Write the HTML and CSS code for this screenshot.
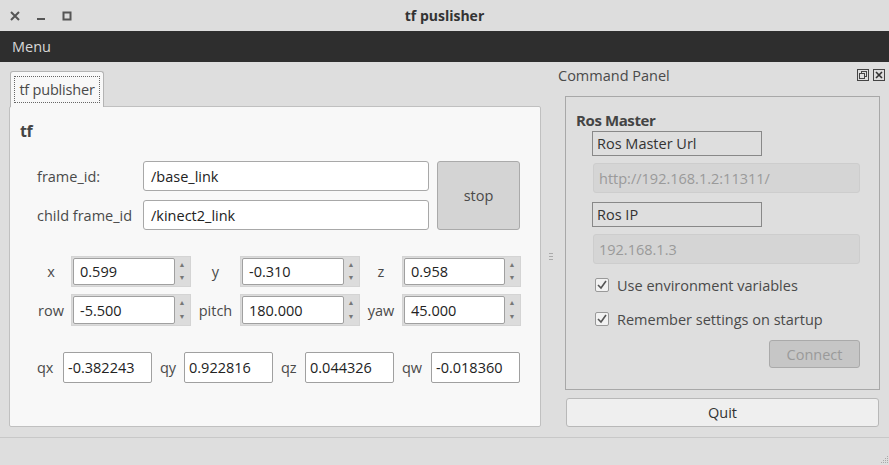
FILE: index.html
```html
<!DOCTYPE html>
<html>
<head>
<meta charset="utf-8">
<link rel="stylesheet" href="styles.css">
</head>
<body>
<div class="window">
  <div class="titlebar">
    <div class="wm-buttons">
      <svg class="wm-icon" width="10" height="10" viewBox="0 0 10 10"><path d="M1 1L9 9M9 1L1 9" stroke="#555" stroke-width="2"/></svg>
      <svg class="wm-icon" width="10" height="10" viewBox="0 0 10 10"><path d="M1 8H9" stroke="#555" stroke-width="2"/></svg>
      <svg class="wm-icon" width="10" height="10" viewBox="0 0 10 10"><rect x="1.5" y="1.5" width="7" height="7" fill="none" stroke="#555" stroke-width="2"/></svg>
    </div>
    <div class="title">tf puslisher</div>
  </div>
  <div class="menubar"><span class="menu-item">Menu</span></div>
  <div class="main">
    <div class="left">
      <div class="tabbar">
        <div class="tab"><span class="tab-focus">tf publisher</span></div>
      </div>
      <div class="tabpanel">
        <div class="heading">tf</div>
        <div class="frame-grid">
          <label class="lbl">frame_id:</label>
          <div class="field">/base_link</div>
          <div class="stop-btn">stop</div>
          <label class="lbl">child frame_id</label>
          <div class="field">/kinect2_link</div>
        </div>
        <div class="spin-grid">
          <span class="clbl">x</span>
          <div class="spin"><div class="spin-val">0.599</div><div class="spin-arrows"><span>▲</span><span>▼</span></div></div>
          <span class="clbl">y</span>
          <div class="spin"><div class="spin-val">-0.310</div><div class="spin-arrows"><span>▲</span><span>▼</span></div></div>
          <span class="clbl">z</span>
          <div class="spin"><div class="spin-val">0.958</div><div class="spin-arrows"><span>▲</span><span>▼</span></div></div>
          <span class="clbl">row</span>
          <div class="spin"><div class="spin-val">-5.500</div><div class="spin-arrows"><span>▲</span><span>▼</span></div></div>
          <span class="clbl">pitch</span>
          <div class="spin"><div class="spin-val">180.000</div><div class="spin-arrows"><span>▲</span><span>▼</span></div></div>
          <span class="clbl">yaw</span>
          <div class="spin"><div class="spin-val">45.000</div><div class="spin-arrows"><span>▲</span><span>▼</span></div></div>
        </div>
        <div class="quat-grid">
          <span class="qlbl first">qx</span>
          <div class="qfield">-0.382243</div>
          <span class="qlbl">qy</span>
          <div class="qfield">0.922816</div>
          <span class="qlbl">qz</span>
          <div class="qfield">0.044326</div>
          <span class="qlbl">qw</span>
          <div class="qfield">-0.018360</div>
        </div>
      </div>
    </div>
    <div class="splitter">
      <svg width="5" height="8" viewBox="0 0 5 8"><path d="M0 1.5H4M0 4.5H4M0 7.5H4" stroke="#aaa" stroke-width="1"/></svg>
    </div>
    <div class="dock">
      <div class="dock-title">
        <span>Command Panel</span>
        <div class="dock-btns">
          <svg width="12" height="12" viewBox="0 0 12 12"><rect x="0.5" y="0.5" width="11" height="11" fill="#ddd" stroke="#444"/><rect x="4.5" y="2.5" width="5" height="5" fill="none" stroke="#444"/><rect x="2.5" y="4.5" width="5" height="5" fill="#ddd" stroke="#444"/></svg>
          <svg width="12" height="12" viewBox="0 0 12 12"><rect x="0.5" y="0.5" width="11" height="11" fill="#ddd" stroke="#444"/><path d="M3 3L9 9M9 3L3 9" stroke="#333" stroke-width="1.6"/></svg>
        </div>
      </div>
      <div class="groupbox">
        <div class="group-title">Ros Master</div>
        <div class="gb-body">
          <div class="boxlabel">Ros Master Url</div>
          <div class="dis-field">http://192.168.1.2:11311/</div>
          <div class="boxlabel">Ros IP</div>
          <div class="dis-field">192.168.1.3</div>
          <div class="check-row">
            <span class="checkbox"><svg width="14" height="14" viewBox="0 0 14 14"><path d="M3 7L6 10L11 3" fill="none" stroke="#555" stroke-width="1.6"/></svg></span>
            <span>Use environment variables</span>
          </div>
          <div class="check-row">
            <span class="checkbox"><svg width="14" height="14" viewBox="0 0 14 14"><path d="M3 7L6 10L11 3" fill="none" stroke="#555" stroke-width="1.6"/></svg></span>
            <span>Remember settings on startup</span>
          </div>
          <div class="connect-row"><div class="connect-btn">Connect</div></div>
        </div>
      </div>
      <div class="quit-btn">Quit</div>
    </div>
  </div>
  <div class="statusbar">
    <svg class="grip" width="10" height="10" viewBox="0 0 10 10" fill="#aaa"><rect x="8" y="2" width="1" height="1"/><rect x="6" y="4" width="1" height="1"/><rect x="8" y="4" width="1" height="1"/><rect x="4" y="6" width="1" height="1"/><rect x="6" y="6" width="1" height="1"/><rect x="8" y="6" width="1" height="1"/><rect x="2" y="8" width="1" height="1"/><rect x="4" y="8" width="1" height="1"/><rect x="6" y="8" width="1" height="1"/><rect x="8" y="8" width="1" height="1"/></svg>
  </div>
</div>
</body>
</html>
```

FILE: styles.css
```css
* { box-sizing: border-box; }
html, body { margin: 0; padding: 0; }
body {
  width: 889px;
  height: 465px;
  overflow: hidden;
  background: #dedede;
  font-family: "Open Sans", "Noto Sans", sans-serif;
  font-size: 14.5px;
  color: #4a4a4a;
}
.window { display: flex; flex-direction: column; height: 465px; }

.titlebar {
  height: 31px;
  background: #dddddd;
  display: flex;
  align-items: center;
  position: relative;
}
.wm-buttons { display: flex; gap: 16px; padding-left: 10px; padding-top: 1px; }
.wm-icon { display: block; }
.title {
  position: absolute;
  left: 0; right: 0; top: 0;
  line-height: 31px;
  text-align: center;
  font-weight: bold;
  color: #333;
  font-size: 14px;
}

.menubar {
  height: 31px;
  background: #2e2e2e;
  display: flex;
  align-items: center;
  padding-left: 12px;
}
.menu-item { color: #d8d8d8; font-size: 14.5px; }

.main { flex: 1; display: flex; }
.left { width: 541px; padding: 9px 0 0 9px; display: flex; flex-direction: column; }
.tabbar { height: 35px; display: flex; align-items: flex-end; }
.tab {
  margin-left: 1px;
  width: 94px;
  height: 36px;
  margin-bottom: -1px;
  background: #f8f8f8;
  border: 1px solid #b4b4b4;
  border-bottom: none;
  border-radius: 3px 3px 0 0;
  padding: 4px 3px 3px 3px;
  position: relative;
  z-index: 1;
}
.tab-focus {
  display: flex;
  align-items: center;
  justify-content: center;
  height: 27px;
  border: 1px dotted #666;
  color: #4a4a4a;
  white-space: nowrap;
  letter-spacing: -0.2px;
}
.tabpanel {
  height: 321px;
  background: #f8f8f8;
  border: 1px solid #c0c0c0;
  border-radius: 2px;
  display: flex;
  flex-direction: column;
}
.heading {
  font-weight: bold;
  font-size: 16px;
  letter-spacing: -0.5px;
  color: #444;
  padding: 13px 0 0 10px;
  line-height: 22px;
  height: 54px;
}
.frame-grid {
  display: grid;
  grid-template-columns: 106px 286px 91px;
  grid-template-rows: 30px 30px;
  column-gap: 0;
  row-gap: 9px;
  padding-left: 27px;
}
.lbl { display: flex; align-items: center; color: #4a4a4a; white-space: nowrap; }
.field {
  background: #fff;
  border: 1px solid #a8a8a8;
  border-radius: 3px;
  display: flex;
  align-items: center;
  padding-left: 7px;
  color: #222;
}
.stop-btn {
  grid-column: 3;
  grid-row: 1 / span 2;
  margin-left: 8px;
  background: #d4d4d4;
  border: 1px solid #aaa;
  border-radius: 3px;
  display: flex;
  align-items: center;
  justify-content: center;
  color: #4a4a4a;
}
.spin-grid {
  margin-top: 26px;
  display: grid;
  grid-template-columns: 34px 120px 49px 120px 42px 119px;
  grid-template-rows: 31px 32px;
  row-gap: 7px;
  padding-left: 27px;
}
.clbl { display: flex; align-items: center; justify-content: center; }
.spin-grid .clbl:nth-child(6n+1) { width: 28px; }
.spin {
  display: flex;
  background: #dcdcdc;
  border: 1px solid #d4d4d4;
  padding: 1px;
}
.spin-val {
  flex: 1;
  background: #fff;
  border: 1px solid #a0a0a0;
  border-radius: 2px;
  display: flex;
  align-items: center;
  padding-left: 6px;
  color: #222;
}
.spin-arrows {
  width: 14px;
  display: flex;
  flex-direction: column;
  justify-content: space-around;
  align-items: center;
  font-size: 7px;
  color: #777;
  line-height: 8px;
}
.quat-grid {
  margin-top: 26px;
  display: grid;
  grid-template-columns: 26px 89px 32px 89px 32px 89px 37px 89px;
  grid-template-rows: 31px;
  padding-left: 27px;
}
.qlbl { display: flex; align-items: center; padding-left: 8px; }
.qlbl.first { padding-left: 0; }
.qfield {
  background: #fff;
  border: 1px solid #a0a0a0;
  border-radius: 2px;
  display: flex;
  align-items: center;
  padding-left: 4px;
  color: #222;
  white-space: nowrap;
  overflow: hidden;
}

.splitter {
  width: 16px;
  display: flex;
  align-items: center;
  justify-content: center;
  padding-top: 12px;
}
.splitter svg { margin-left: 4px; }

.dock { flex: 1; display: flex; flex-direction: column; padding-right: 9px; }
.dock-title {
  height: 34px;
  display: flex;
  align-items: center;
  justify-content: space-between;
  padding-left: 1px;
  padding-bottom: 7px;
  color: #4a4a4a;
}
.dock-btns { display: flex; gap: 4px; margin-right: -5px; margin-top: -2px; }
.dock-btns svg { display: block; }
.groupbox {
  margin-left: 8px;
  height: 294px;
  border: 1px solid #a8a8a8;
}
.group-title {
  font-weight: bold;
  font-size: 15px;
  letter-spacing: -0.4px;
  color: #444;
  padding: 13px 0 0 10px;
  line-height: 20px;
}
.gb-body { padding-left: 26px; padding-right: 19px; display: flex; flex-direction: column; }
.boxlabel {
  width: 170px;
  height: 25px;
  border: 1px solid #888;
  display: flex;
  align-items: center;
  padding-left: 4px;
  color: #333;
  margin-top: 1px;
}
.dis-field {
  margin-left: 1px;
  margin-top: 7px;
  margin-bottom: 8px;
  height: 30px;
  background: #d5d5d5;
  border: 1px solid #cdcdcd;
  border-radius: 3px;
  display: flex;
  align-items: center;
  padding-left: 5px;
  color: #9a9a9a;
}
.check-row {
  display: flex;
  align-items: center;
  gap: 8px;
  height: 20px;
  margin-left: 3px;
  margin-top: 3px;
  margin-bottom: 11px;
  color: #4a4a4a;
}
.checkbox {
  width: 14px;
  height: 14px;
  border: 1px solid #999;
  border-radius: 2px;
  background: #f2f2f2;
  display: flex;
  align-items: center;
  justify-content: center;
}
.checkbox svg { display: block; margin: -1px; }
.connect-row { display: flex; justify-content: flex-end; margin-top: 0; }
.connect-btn {
  width: 91px;
  height: 28px;
  background: #c6c6c6;
  border: 1px solid #aaa;
  border-radius: 3px;
  display: flex;
  align-items: center;
  justify-content: center;
  color: #9a9a9a;
}
.quit-btn {
  margin-left: 9px;
  margin-right: 1px;
  margin-top: 8px;
  height: 29px;
  background: #efefef;
  border: 1px solid #b8b8b8;
  border-radius: 3px;
  display: flex;
  align-items: center;
  justify-content: center;
  color: #333;
}

.statusbar {
  height: 28px;
  border-top: 1px solid #c8c8c8;
  display: flex;
  align-items: flex-end;
  justify-content: flex-end;
  padding: 0 0 1px 0;
}
.grip { display: block; }
```
